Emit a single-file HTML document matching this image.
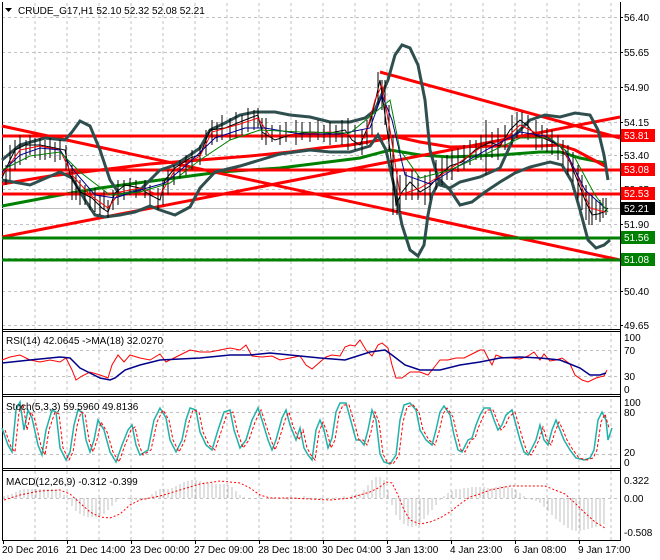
<!DOCTYPE html>
<html><head><meta charset="utf-8"><style>
html,body{margin:0;padding:0;background:#fff;}
svg{display:block;font-family:"Liberation Sans",sans-serif;}
</style></head><body>
<svg width="660" height="560" viewBox="0 0 660 560" xmlns="http://www.w3.org/2000/svg">
<rect width="660" height="560" fill="#fff"/>
<g stroke="#c0c0c0" stroke-dasharray="3,3" stroke-width="1">
<path d="M35 3V540M67 3V540M99 3V540M131 3V540M163 3V540M195 3V540M227 3V540M259 3V540M291 3V540M323 3V540M355 3V540M387 3V540M419 3V540M451 3V540M483 3V540M515 3V540M547 3V540M579 3V540M611 3V540"/>
<path d="M2 17.5H620M2 52.5H620M2 87.5H620M2 122.5H620M2 155.5H620M2 189.5H620M2 224.5H620M2 258.5H620M2 291.5H620M2 325.5H620"/>
<path d="M2 350.5H620M2 376.5H620M2 412.5H620M2 454.5H620M2 498.5H620"/>
</g>
<g fill="#fff" stroke="none"><rect x="2" y="329" width="618" height="2"/><rect x="2" y="394" width="618" height="3"/><rect x="2" y="468" width="618" height="3"/></g>
<g stroke="#000" stroke-width="1" fill="none">
<path d="M2.5 2V541M620.5 2V541"/>
<path d="M2 329.5H620M2 331.5H620M2 394.5H620M2 396.5H620M2 468.5H620M2 470.5H620M2 540.5H620"/>
</g>
<path d="M2 208.5H620" stroke="#c0c0c0" stroke-width="1"/>
<polyline fill="none" stroke="#008000" stroke-width="3" points="2,206 60,195 100,188 160,180 220,172 280,168 320,163 360,158 390,150 420,155 450,157 500,155 540,152 560,152 580,158 605,163"/>
<polyline fill="none" stroke="#ff0000" stroke-width="3" points="2,184 50,176 100,170 150,164 200,160 250,156 290,152 320,148 350,145 380,140 393,136 420,142 450,147 500,146 540,146 560,145 575,150 590,158 605,166"/>
<g stroke="#ff0000" stroke-width="3" fill="none">
<path d="M2 126L620 260"/>
<path d="M380 72L620 138"/>
<path d="M2 237L620 117"/>
<path d="M2 136H620M2 170H620M2 194H620"/>
</g>
<g stroke="#008000" stroke-width="3"><path d="M2 238H620M2 260H620"/></g>
<g fill="none" stroke="#2f4f4f" stroke-width="3">
<polyline points="2,160 20,145 45,138 65,140 72,132 80,121 90,126 100,150 110,180 120,195 140,190 160,170 175,165 190,155 200,148 210,130 225,123 240,115 255,112 275,112 290,115 310,117 330,122 350,122 365,118 375,110 388,80 395,55 402,45 410,48 418,65 425,100 430,150 440,185 450,188 460,182 480,177 500,168 515,135 530,120 545,115 560,117 575,113 590,115 598,130 604,155 608,180"/>
<polyline points="2,180 30,185 60,172 72,178 85,200 95,215 105,217 120,215 135,212 150,206 160,210 175,215 190,207 200,188 215,172 240,166 260,160 280,154 310,150 330,152 350,152 370,146 378,135 386,150 395,190 402,225 410,250 418,256 424,245 428,215 432,195 440,180 450,190 460,205 472,202 485,192 500,182 515,173 530,167 550,162 562,165 572,182 580,210 588,240 596,248 604,245 610,240"/>
</g>
<g stroke="#000" stroke-width="1">
<path d="M6 165V185M10 145V180M15 140V170M20 135V165M26 140V160M30 135V155M35 138V158M40 138V160M45 140V160M50 138V158M55 142V162M60 140V160M66 145V170M72 165V200M76 175V200M80 180V205M85 185V205M90 190V210M95 188V212M100 195V215M104 190V210M108 200V218M113 190V210M118 180V205M124 180V200M130 178V195M136 180V198M145 180V198M150 185V205M158 188V210M163 180V205M168 170V195M174 165V185M180 160V178M186 155V175M192 150V170M200 145V165M206 130V155M212 120V145M217 122V142M222 115V140M230 118V140M236 112V138M242 115V135M248 108V132M254 110V130M258 108V128M262 118V140M266 118V145M272 125V142M280 125V145M286 122V142M296 120V145M302 122V140M310 122V142M318 120V140M324 125V142M330 122V145M336 125V142M342 120V145M348 118V150M355 125V150M362 130V155M367 120V145M372 110V135M378 72V105M382 80V110M385 80V125M389 105V150M393 135V215M397 170V215M400 175V212M406 172V200M412 170V200M418 175V200M425 175V205M430 170V200M436 160V190M442 158V185M447 155V180M452 150V180M458 148V172M464 145V170M470 140V165M476 140V160M481 135V160M486 120V175M492 132V158M498 128V160M505 125V150M512 115V145M517 112V138M522 112V135M528 115V140M536 120V150M542 125V150M547 128V152M552 130V155M558 135V160M563 140V165M568 145V175M573 152V182M578 165V200M582 175V210M586 185V220M589 195V225M592 195V225M596 200V220M600 200V222M603 198V218M606 198V215"/>
</g>
<polyline fill="none" stroke="#000" stroke-width="1" points="2,178 10,160 15,150 25,145 40,145 55,148 65,150 70,175 80,192 92,198 102,208 108,212 115,193 125,185 140,188 150,195 160,200 165,180 175,168 190,158 200,155 210,130 225,128 240,122 250,118 258,115 262,132 275,140 290,135 310,132 330,133 345,130 352,140 360,145 370,122 376,98 380,80 384,108 390,150 396,205 402,192 410,182 420,192 430,186 440,175 450,166 462,162 475,150 490,142 500,146 510,130 520,120 528,126 535,135 548,140 560,146 570,162 578,182 585,200 592,215 598,214 604,212 608,208"/>
<polyline fill="none" stroke="#ff0000" stroke-width="1" points="2,175 20,150 40,146 60,150 72,175 90,195 108,208 120,192 140,188 160,195 175,170 200,156 212,132 240,124 258,118 270,136 300,134 330,132 350,135 365,138 375,100 382,85 390,130 400,195 420,188 440,176 460,162 480,148 500,144 520,125 540,135 560,145 575,170 590,208 605,212"/>
<polyline fill="none" stroke="#00008b" stroke-width="1" points="2,172 20,155 40,148 60,150 75,172 95,195 115,198 140,190 165,183 190,162 215,138 245,128 265,128 300,134 340,134 370,128 382,95 392,120 405,175 430,184 460,165 490,148 520,132 545,136 565,150 585,190 605,208"/>
<polyline fill="none" stroke="#008000" stroke-width="1" points="2,170 30,156 60,152 80,172 110,195 140,192 170,183 200,160 230,140 260,130 300,132 350,133 378,110 390,100 400,150 420,178 450,170 490,152 520,138 550,138 575,158 595,195 608,212"/>
<polyline fill="none" stroke="#ff0000" stroke-width="1" points="2,360 10,357 20,355 30,360 40,362 50,360 60,362 66,358 72,370 76,380 82,376 90,372 100,375 108,378 112,365 118,355 124,362 130,355 140,358 150,360 160,354 166,362 170,360 180,355 190,350 200,352 210,352 220,350 230,348 240,350 246,345 252,356 262,357 272,356 280,360 290,358 300,356 306,365 312,369 320,362 326,357 332,355 340,356 345,347 350,345 355,346 360,340 366,350 372,356 378,345 382,343 388,348 392,365 396,378 402,378 410,372 420,372 428,375 436,365 440,360 448,360 456,358 464,358 470,355 476,352 480,350 484,350 488,358 492,365 496,355 504,358 512,358 520,359 528,356 534,352 540,360 544,354 550,361 556,360 562,358 570,364 575,375 582,380 588,382 596,378 604,376 607,370"/>
<polyline fill="none" stroke="#00008b" stroke-width="1.5" points="2,363 30,360 60,357 70,358 80,368 90,373 100,378 110,380 115,378 125,370 140,365 160,360 200,358 230,355 250,355 270,353 300,356 320,358 345,360 370,352 385,350 392,355 405,365 420,370 440,370 460,365 480,362 500,358 520,357 540,358 560,360 580,368 590,375 600,375 606,373"/>
<polyline fill="none" stroke="#20b2aa" stroke-width="1.5" points="2,428 8,445 12,452 16,410 20,402 24,430 28,410 32,418 38,445 42,455 46,430 52,410 56,412 60,448 66,460 70,452 74,425 78,410 82,412 86,440 90,452 94,440 98,420 104,430 110,452 116,462 122,445 128,430 132,425 136,445 140,455 148,450 154,420 160,408 166,418 170,440 176,452 182,440 186,420 190,408 196,410 200,432 206,445 212,450 218,430 224,412 230,410 234,430 240,448 246,440 252,420 258,408 262,420 268,440 272,450 276,440 282,418 286,410 290,425 296,440 300,428 304,448 308,455 312,460 316,430 320,420 324,430 328,448 332,438 336,412 340,403 346,403 352,425 356,440 360,440 364,445 368,430 372,410 376,420 380,454 384,462 390,464 396,455 400,420 404,405 410,403 416,410 420,430 426,440 432,445 436,430 440,412 444,406 450,415 454,435 458,450 462,452 468,440 472,438 476,425 480,415 484,408 490,408 494,420 498,430 502,425 506,415 512,410 516,425 520,440 524,452 528,455 532,448 536,440 540,425 544,440 548,445 552,430 556,420 560,430 564,440 570,450 576,458 584,460 590,458 594,450 598,420 602,412 606,420 608,440 612,428"/>
<polyline fill="none" stroke="#ff0000" stroke-width="1" stroke-dasharray="3,2" points="5,430 11,447 15,452 19,412 23,404 27,430 31,412 35,420 41,446 45,455 49,430 55,412 59,414 63,448 69,460 73,452 77,426 81,412 85,414 89,440 93,452 97,440 101,422 107,432 113,452 119,462 125,445 131,430 135,427 139,445 143,455 151,450 157,422 163,410 169,420 173,440 179,452 185,440 189,422 193,410 199,412 203,432 209,445 215,450 221,432 227,414 233,412 237,430 243,448 249,440 255,422 261,410 265,422 271,440 275,450 279,440 285,420 289,412 293,426 299,440 303,430 307,448 311,455 315,460 319,432 323,422 327,432 331,448 335,440 339,414 343,405 349,405 355,425 359,440 363,440 367,445 371,432 375,412 379,422 383,454 387,462 393,464 399,455 403,422 407,407 413,405 419,412 423,430 429,440 435,445 439,432 443,414 447,408 453,417 457,435 461,450 465,452 471,440 475,438 479,426 483,417 487,410 493,410 497,420 501,430 505,426 509,417 515,412 519,426 523,440 527,452 531,455 535,448 539,440 543,427 547,440 551,445 555,432 559,422 563,430 567,440 573,450 579,458 587,460 593,458 597,450 601,422 605,414 609,428"/>
<path stroke="#c0c0c0" stroke-width="1" fill="none" d="M4 498V496M8 498V495M12 498V494M16 498V492M20 498V490M24 498V489M28 498V489M32 498V489M36 498V489M40 498V489M44 498V489M48 498V489M52 498V489M56 498V490M60 498V492M64 498V495M68 498V500M72 498V506M76 498V511M80 498V514M84 498V516M88 498V517M92 498V517M96 498V517M100 498V516M104 498V514M108 498V510M112 498V506M116 498V502M120 498V499M128 498V499M132 498V500M136 498V500M140 498V500M144 498V499M148 498V497M152 498V494M156 498V491M160 498V489M164 498V489M168 498V489M172 498V488M176 498V486M180 498V484M184 498V482M188 498V481M192 498V480M196 498V480M200 498V481M204 498V482M208 498V483M212 498V483M216 498V484M220 498V484M224 498V484M228 498V485M232 498V487M236 498V491M240 498V495M244 498V497M260 498V499M272 498V497M280 498V499M288 498V500M296 498V497M304 498V496M312 498V499M320 498V500M328 498V499M336 498V497M344 498V496M352 498V495M356 498V494M360 498V494M364 498V490M368 498V485M372 498V480M376 498V477M380 498V477M384 498V480M388 498V490M392 498V505M396 498V515M400 498V520M404 498V524M408 498V526M412 498V527M416 498V526M420 498V523M424 498V519M428 498V515M432 498V510M436 498V505M440 498V500M444 498V496M448 498V493M452 498V491M456 498V489M460 498V489M464 498V488M468 498V488M472 498V487M476 498V487M480 498V487M484 498V487M488 498V488M492 498V488M496 498V487M500 498V486M504 498V486M508 498V487M512 498V488M516 498V490M520 498V493M524 498V496M528 498V499M532 498V500M536 498V501M540 498V503M544 498V507M548 498V511M552 498V515M556 498V519M560 498V522M564 498V525M568 498V528M572 498V530M576 498V531M580 498V531M584 498V530M588 498V529M592 498V528M596 498V527M600 498V525M604 498V524"/>
<polyline fill="none" stroke="#ff0000" stroke-width="1" stroke-dasharray="2,2" points="4,500 20,495 40,491 60,490 70,494 80,503 90,512 100,517 110,518 120,514 130,505 140,500 160,496 180,490 200,484 220,481 240,483 250,488 260,495 270,498 290,498 310,499 330,500 350,498 370,492 380,487 386,482 392,483 398,495 404,510 410,520 420,524 430,522 440,518 450,512 460,504 470,497 480,494 490,490 510,486 530,486 545,486 555,490 565,494 575,503 585,513 595,522 605,528"/>
<g font-size="10" fill="#000">
<text x="624" y="21">56.40</text><text x="624" y="56">55.65</text><text x="624" y="91">54.90</text><text x="624" y="126">54.15</text><text x="624" y="159">53.40</text><text x="624" y="193">52.65</text><text x="624" y="228">51.90</text><text x="624" y="295">50.40</text><text x="624" y="329">49.65</text>
<text x="624" y="341">100</text><text x="624" y="354">70</text><text x="624" y="380">30</text><text x="624" y="393">0</text>
<text x="624" y="406">100</text><text x="624" y="416">80</text><text x="624" y="456">20</text><text x="624" y="466">0</text>
<text x="624" y="484">0.322</text><text x="624" y="502">0.00</text><text x="624" y="536">-0.508</text>
</g>
<g stroke="#000"><path d="M620 17.5h3M620 52.5h3M620 87.5h3M620 122.5h3M620 155.5h3M620 189.5h3M620 224.5h3M620 291.5h3M620 325.5h3"/></g>
<rect x="621" y="129" width="34" height="13" fill="#ff0000"/><text x="624" y="139" font-size="10" fill="#fff">53.81</text>
<rect x="621" y="163" width="34" height="13" fill="#ff0000"/><text x="624" y="173" font-size="10" fill="#fff">53.08</text>
<rect x="621" y="187" width="34" height="13" fill="#ff0000"/><text x="624" y="197" font-size="10" fill="#fff">52.53</text>
<rect x="621" y="202" width="34" height="13" fill="#000"/><text x="624" y="212" font-size="10" fill="#fff">52.21</text>
<rect x="621" y="231" width="34" height="13" fill="#008000"/><text x="624" y="241" font-size="10" fill="#fff">51.56</text>
<rect x="621" y="253" width="34" height="13" fill="#008000"/><text x="624" y="263" font-size="10" fill="#fff">51.08</text>
<path d="M5 8h7l-3.5 4z" fill="#000"/>
<text x="18" y="14" font-size="10" fill="#000">CRUDE_G17,H1  52.10 52.32 52.08 52.21</text>
<text x="6" y="344" font-size="10" fill="#000">RSI(14) 42.0645  -&gt;MA(18) 32.0270</text>
<text x="6" y="410" font-size="10" fill="#000">Stoch(5,3,3) 59.5960 49.8136</text>
<text x="6" y="485" font-size="10" fill="#000">MACD(12,26,9) -0.312 -0.399</text>
<g stroke="#000"><path d="M3.5 540v4M67.5 540v4M131.5 540v4M195.5 540v4M259.5 540v4M323.5 540v4M387.5 540v4M451.5 540v4M515.5 540v4M579.5 540v4"/></g>
<g font-size="10" fill="#000">
<text x="2" y="553">20 Dec 2016</text><text x="66" y="553">21 Dec 14:00</text><text x="130" y="553">23 Dec 00:00</text><text x="194" y="553">27 Dec 09:00</text><text x="258" y="553">28 Dec 18:00</text><text x="322" y="553">30 Dec 04:00</text><text x="386" y="553">3 Jan 13:00</text><text x="450" y="553">4 Jan 23:00</text><text x="514" y="553">6 Jan 08:00</text><text x="578" y="553">9 Jan 17:00</text>
</g>
</svg>
</body></html>
